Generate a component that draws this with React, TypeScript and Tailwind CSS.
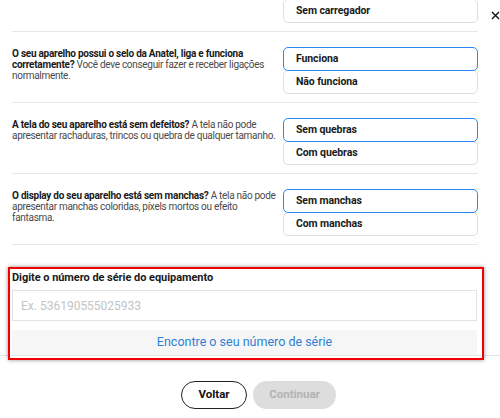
import React from "react";

function Option({ label, selected, first }: { label: string; selected?: boolean; first?: boolean }) {
  return (
    <div
      className={
        "relative flex h-6 items-center rounded-[5px] bg-white px-3 text-[10.5px] font-bold tracking-[-0.1px] text-[#1a1a1a] " +
        (selected ? "z-10 border-[1.5px] border-[#2a8af0] " : "border border-[#dedede] ") +
        (first ? "" : "-mt-px")
      }
    >
      {label}
    </div>
  );
}

function Row({
  children,
  options,
  selected,
  top,
}: {
  children?: React.ReactNode;
  options: string[];
  selected: number;
  top?: boolean;
}) {
  return (
    <div className={"flex items-start justify-between pb-2 " + (top ? "" : "border-t border-[#e6e6e6] pt-[15px]")}>
      <div className="w-[268px] whitespace-nowrap pt-px text-[10px] leading-[11px] tracking-[-0.3px] text-[#4a4a4a]">
        {children}
      </div>
      <div className="flex w-[195px] flex-col">
        {options.map((o, i) => (
          <Option key={o} label={o} selected={i === selected} first={i === 0} />
        ))}
      </div>
    </div>
  );
}

function B({ children }: { children: React.ReactNode }) {
  return <b className="tracking-[-0.25px] text-[#1a1a1a]">{children}</b>;
}

export default function App() {
  return (
    <div
      className="relative h-[418px] w-[500px] overflow-hidden bg-white"
      style={{ fontFamily: "Roboto, 'Noto Sans', sans-serif" }}
    >
      <div className="-mt-[24px] pl-3 pr-[22px]">
        <Row top options={["Com carregador", "Sem carregador"]} selected={0} />
        <Row options={["Funciona", "Não funciona"]} selected={0}>
          <B>O seu aparelho possui o selo da Anatel, liga e funciona</B>
          <br />
          <B>corretamente?</B> Você deve conseguir fazer e receber ligações
          <br />
          normalmente.
        </Row>
        <Row options={["Sem quebras", "Com quebras"]} selected={0}>
          <B>A tela do seu aparelho está sem defeitos?</B> A tela não pode
          <br />
          apresentar rachaduras, trincos ou quebra de qualquer tamanho.
        </Row>
        <Row options={["Sem manchas", "Com manchas"]} selected={0}>
          <B>O display do seu aparelho está sem manchas?</B> A tela não pode
          <br />
          apresentar manchas coloridas, píxels mortos ou efeito
          <br />
          fantasma.
        </Row>
        <div className="border-t border-[#e6e6e6]" />
      </div>

      <div className="border-b border-[#e6e6e6] pt-[26px]">
        <div className="pl-3 pr-[23px]">
          <div className="text-[11px] font-bold leading-[14px] tracking-[-0.05px] text-[#1a1a1a]">
            Digite o número de série do equipamento
          </div>
          <div className="mt-[5px] flex h-[31px] items-center border border-[#e2e2e2] px-2 text-[12px] text-[#c4c4c4]">
            Ex. 536190555025933
          </div>
          <div className="mt-[9px] flex h-[25px] items-center justify-center bg-[#f6f6f6] text-[12.5px] text-[#2f80d4]">
            Encontre o seu número de série
          </div>
        </div>
      </div>

      <div className="flex justify-center gap-[6px] pl-[17px] pt-[25px]">
        <div className="flex h-[28px] w-[66px] items-center justify-center rounded-full border border-[#222] text-[11.5px] font-bold text-[#111]">
          Voltar
        </div>
        <div className="flex h-[28px] w-[83px] items-center justify-center rounded-full bg-[#dddddd] text-[11.5px] font-bold text-[#b3b3b3]">
          Continuar
        </div>
      </div>

      <div className="pointer-events-none absolute left-[8px] top-[267px] h-[93px] w-[476px] border-2 border-[#f00000] shadow-[0_0_4px_rgba(0,0,0,0.45)]" />

      <svg className="absolute left-[491px] top-[11px]" width="9" height="9" viewBox="0 0 9 9">
        <path d="M1 1 L8 8 M8 1 L1 8" stroke="#111" strokeWidth="1.4" />
      </svg>
    </div>
  );
}
